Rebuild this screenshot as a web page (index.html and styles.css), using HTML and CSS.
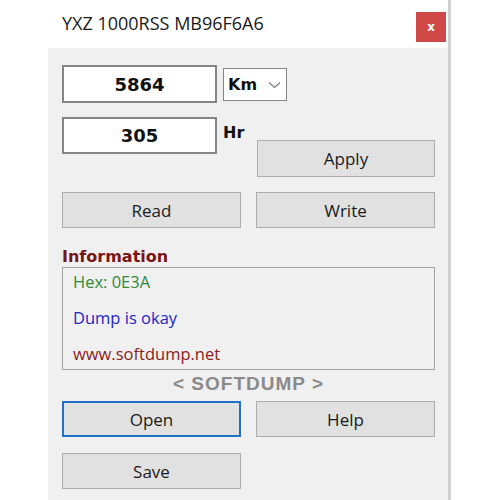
FILE: index.html
```html
<!DOCTYPE html>
<html>
<head>
<meta charset="utf-8">
<link rel="stylesheet" href="styles.css">
</head>
<body>
<div class="window">
  <div class="titlebar">
    <span class="title">YXZ 1000RSS MB96F6A6</span>
    <span class="close">x</span>
  </div>
  <div class="content">
    <div class="row1">
      <div class="textbox tb1">5864</div>
      <div class="select"><span class="sel-text">Km</span>
        <svg class="chev" width="13" height="8" viewBox="0 0 13 8"><path d="M1 1.5 L6.5 6.5 L12 1.5" fill="none" stroke="#7a7a7a" stroke-width="1.1"/></svg>
      </div>
    </div>
    <div class="row2">
      <div class="textbox tb2">305</div>
      <span class="unit">Hr</span>
      <div class="btn apply">Apply</div>
    </div>
    <div class="grid rw">
      <div class="btn">Read</div>
      <div class="btn">Write</div>
    </div>
    <div class="info-title">Information</div>
    <div class="info-box">
      <div class="line hex">Hex: 0E3A</div>
      <div class="line ok">Dump is okay</div>
      <div class="line url">www.softdump.net</div>
    </div>
    <div class="brand">&lt; SOFTDUMP &gt;</div>
    <div class="grid og">
      <div class="btn focused">Open</div>
      <div class="btn">Help</div>
    </div>
    <div class="grid sv">
      <div class="btn">Save</div>
    </div>
  </div>
</div>
</body>
</html>
```

FILE: styles.css
```css
html, body {
  margin: 0;
  padding: 0;
  background: #ffffff;
  height: 500px;
  overflow: hidden;
}
.window {
  margin-left: 48px;
  width: 400px;
  height: 500px;
  border-right: 3px solid #cfcfcf;
  background: #f0f0f0;
  font-family: "Open Sans", sans-serif;
}
.titlebar {
  height: 48px;
  background: #ffffff;
  display: flex;
  align-items: center;
  justify-content: space-between;
  padding-left: 14px;
  padding-right: 2px;
  box-sizing: border-box;
}
.title {
  font-size: 18px;
  color: #1a1a1a;
  margin-top: -2px;
}
.close {
  width: 30px;
  height: 30px;
  background: #d04848;
  color: #ffffff;
  font-family: "DejaVu Sans", sans-serif;
  font-weight: bold;
  font-size: 12px;
  display: flex;
  align-items: center;
  justify-content: center;
  line-height: 1;
  margin-top: 6px;
}
.content {
  padding: 17px 13px 0 14px;
}
.row1 {
  display: flex;
  align-items: center;
  gap: 6px;
}
.textbox {
  width: 155px;
  box-sizing: border-box;
  background: #ffffff;
  border: 2px solid #858585;
  font-family: "DejaVu Sans", sans-serif;
  font-weight: bold;
  font-size: 18px;
  color: #111;
  display: flex;
  align-items: center;
  justify-content: center;
}
.tb1 { height: 38px; }
.tb2 { height: 37px; }
.select {
  width: 64px;
  height: 33px;
  box-sizing: border-box;
  background: #ffffff;
  border: 1.5px solid #858585;
  display: flex;
  align-items: center;
  padding-left: 4px;
  gap: 11px;
}
.sel-text, .unit {
  font-family: "DejaVu Sans", sans-serif;
  font-weight: bold;
  font-size: 16px;
  color: #111;
}
.chev { margin-top: 1px; }
.row2 {
  display: flex;
  align-items: flex-start;
  margin-top: 14px;
}
.unit {
  margin-left: 6px;
  margin-top: 6px;
}
.btn {
  height: 36px;
  box-sizing: border-box;
  background: #e1e1e1;
  border: 1px solid #adadad;
  display: flex;
  align-items: center;
  justify-content: center;
  font-size: 17px;
  color: #1a1a1a;
}
.apply {
  width: 178px;
  height: 37px;
  margin-left: auto;
  margin-top: 23px;
}
.grid {
  display: grid;
  grid-template-columns: 179px 179px;
  column-gap: 15px;
}
.rw { margin-top: 15px; }
.info-title {
  margin-top: 20px;
  font-family: "DejaVu Sans", sans-serif;
  font-weight: bold;
  font-size: 16px;
  line-height: 18px;
  color: #7b1414;
}
.info-box {
  margin-top: 1px;
  border: 1px solid #a3a3a3;
  height: 103px;
  box-sizing: border-box;
  padding: 4px 10px 5px 10px;
  display: flex;
  flex-direction: column;
  gap: 16px;
}
.line {
  font-size: 16.5px;
  line-height: 20px;
}
.hex { color: #2f8a3a; }
.ok { color: #2525c5; }
.url { color: #8a1c1c; }
.brand {
  margin-top: 4px;
  text-align: center;
  font-family: "Liberation Sans", Arial, sans-serif;
  font-weight: bold;
  font-size: 19px;
  line-height: 20px;
  letter-spacing: 1px;
  color: #8a8a8a;
}
.og { margin-top: 7px; }
.sv { margin-top: 16px; }
.focused {
  border: 2px solid #1f72c8;
}
```
